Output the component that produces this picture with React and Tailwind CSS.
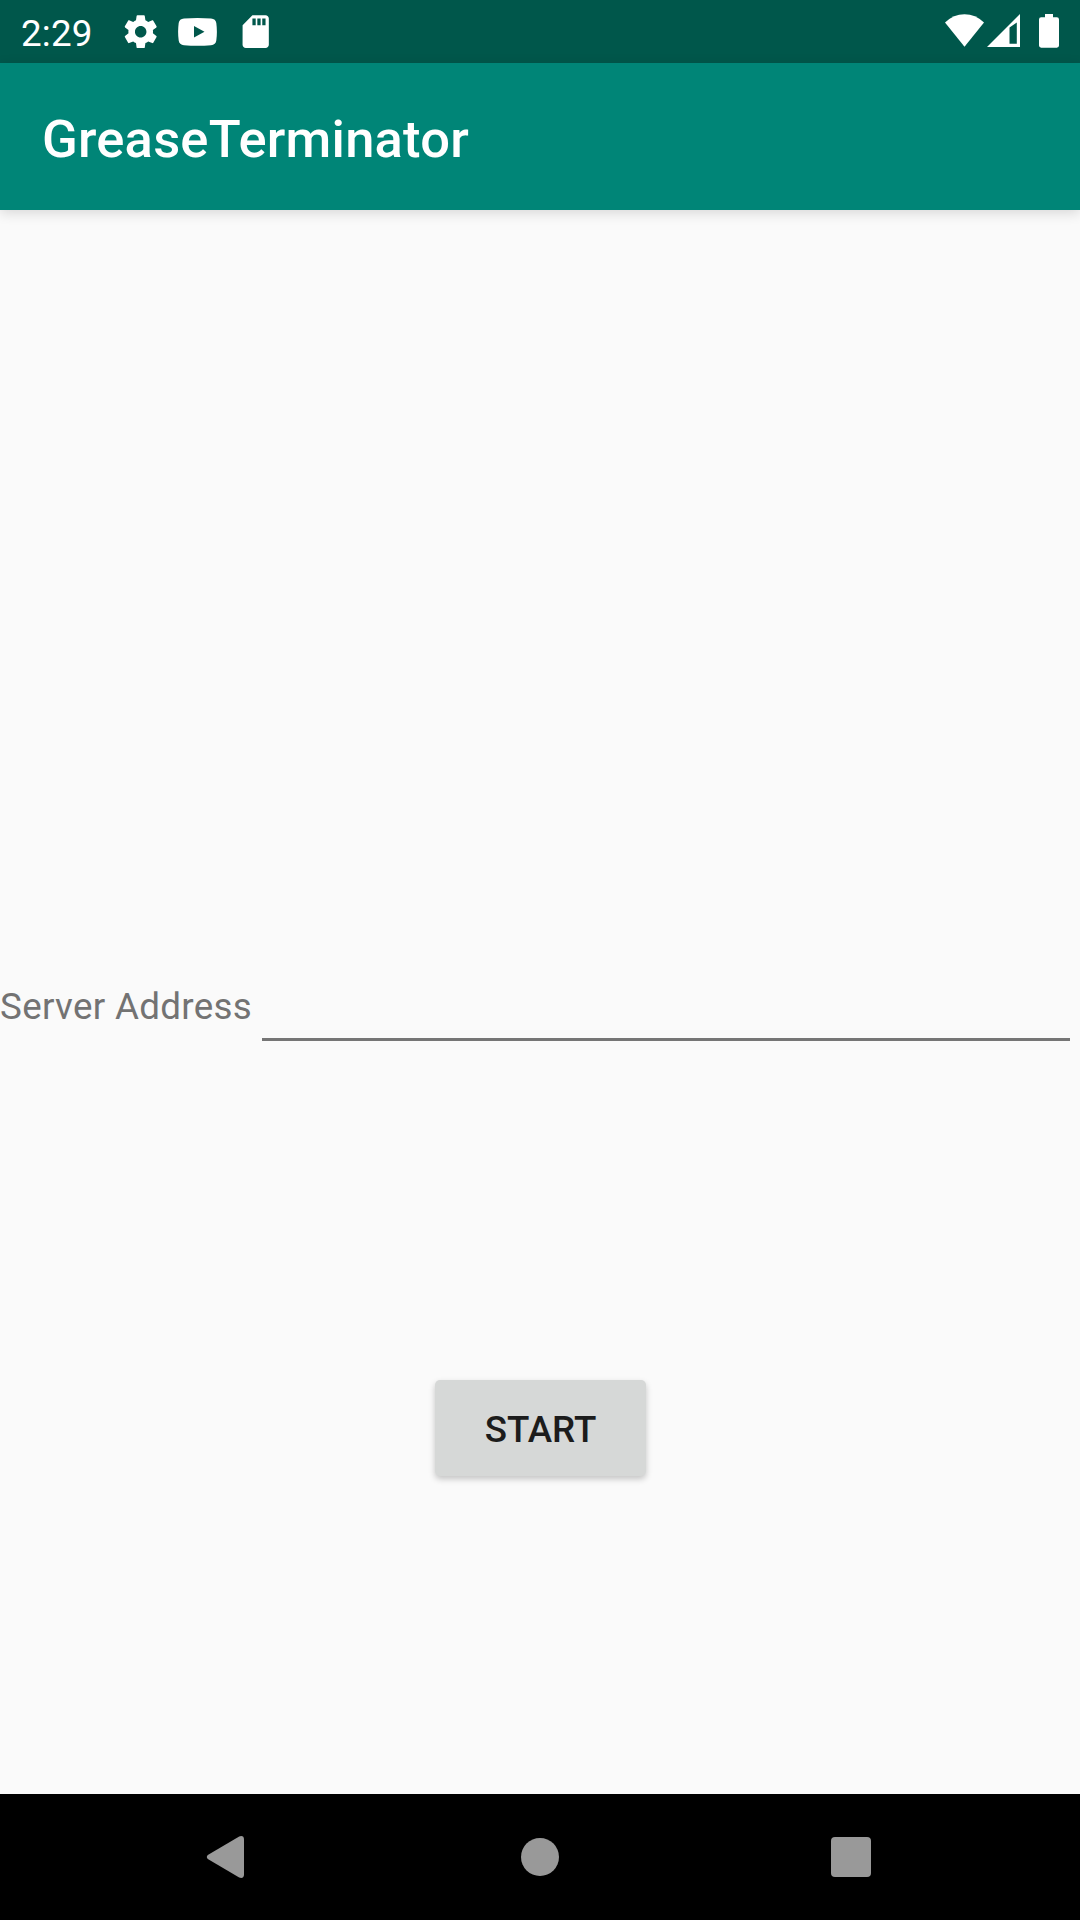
function StatusBar() {
  return (
    <header className="flex h-[63px] w-full items-start bg-[#00574b] text-white">
      <span className="ml-[21px] mt-[12px] w-[100px] text-[36.75px] leading-[43px] tracking-[0.2px]">2:29</span>
      <svg className="mt-[12px] h-[39.4px] w-[39.4px]" viewBox="0 0 24 24" fill="currentColor">
        <path d="M19.43 12.98c.04-.32.07-.64.07-.98s-.03-.66-.07-.98l2.11-1.65c.19-.15.24-.42.12-.64l-2-3.46c-.12-.22-.39-.3-.61-.22l-2.49 1c-.52-.4-1.08-.73-1.69-.98l-.38-2.65C14.46 2.18 14.25 2 14 2h-4c-.25 0-.46.18-.49.42l-.38 2.65c-.61.25-1.17.59-1.69.98l-2.49-1c-.23-.09-.49 0-.61.22l-2 3.46c-.13.22-.07.49.12.64l2.11 1.65c-.04.32-.07.65-.07.98s.03.66.07.98l-2.11 1.65c-.19.15-.24.42-.12.64l2 3.46c.12.22.39.3.61.22l2.49-1c.52.4 1.08.73 1.69.98l.38 2.65c.03.24.24.42.49.42h4c.25 0 .46-.18.49-.42l.38-2.65c.61-.25 1.17-.59 1.69-.98l2.49 1c.23.09.49 0 .61-.22l2-3.46c.12-.22.07-.49-.12-.64l-2.11-1.65zM12 15.5c-1.93 0-3.5-1.57-3.5-3.5s1.57-3.5 3.5-3.5 3.5 1.57 3.5 3.5-1.57 3.5-3.5 3.5z" />
      </svg>
      <svg className="ml-[17.6px] mt-[18px] h-[28px] w-[39px]" viewBox="0 0 39 28" fill="currentColor" fillRule="evenodd">
        <path d="M6 .5Q19.500-.5 33 .5Q37.700.8 38.300 5Q39.500 13.800 38.300 22.500Q37.700 26.800 33 27.200Q19.500 28.200 6 27.200Q1.300 26.800.7 22.500Q-.5 13.800.7 5Q1.300.8 6 .5ZM16 8V19.500L26.500 13.700Z" />
      </svg>
      <svg className="ml-[19.200px] mt-[12px] h-[39.4px] w-[39.4px]" viewBox="0 0 24 24" fill="currentColor">
        <path d="M18 2h-8L4.02 8 4 20c0 1.1.9 2 2 2h12c1.1 0 2-.9 2-2V4c0-1.1-.9-2-2-2zm-6 6h-2V4h2v4zm3 0h-2V4h2v4zm3 0h-2V4h2v4z" />
      </svg>
      <div className="ml-auto mr-[21px] mt-[14px] flex">
        <svg className="h-[34px] w-[39px]" viewBox="0 0 39 34" fill="currentColor">
          <path d="M0 8.600Q8.500.3 19.500.3T39 8.600L19.500 32.800Z" />
        </svg>
        <svg className="ml-[3px] h-[34px] w-[33px]" viewBox="0 0 33 34" fill="currentColor" fillRule="evenodd">
          <path d="M0 33L33 0V33ZM22.500 13.500V29.800H29.800V8.500Z" />
        </svg>
        <svg className="ml-[19px] h-[34px] w-[20px]" viewBox="0 0 20 34" fill="currentColor">
          <path d="M6 0H14V3.200H17.800Q20 3.200 20 5.400V31.600Q20 33.700 17.800 33.700H2.200Q0 33.700 0 31.600V5.400Q0 3.200 2.200 3.200H6Z" />
        </svg>
      </div>
    </header>
  );
}

function AppBar() {
  return (
    <div className="relative flex h-[147px] items-center bg-[#008577] pl-[42px] pt-[5px] shadow-[0_3px_12px_rgba(0,0,0,0.14)]">
      <h1 className="text-[52.5px] font-medium leading-[62px] tracking-[0.22px] text-white">GreaseTerminator</h1>
    </div>
  );
}

function NavBar() {
  return (
    <nav className="flex h-[126px] items-center bg-black text-[#999999]">
      <svg className="ml-[206px] h-[42px] w-[38px]" viewBox="0 0 38 42" fill="currentColor">
        <path d="M1.800 18.900L33.200.4Q38 -.9 38 3.500V38.500Q38 42.900 33.200 41.600L1.800 23.100Q-.2 21 1.800 18.900Z" />
      </svg>
      <div className="ml-[277px] size-[38px] rounded-full bg-[#999999]" />
      <div className="ml-[272px] size-[40px] rounded-[4px] bg-[#999999]" />
    </nav>
  );
}

export default function App() {
  return (
    <div className="flex h-[1920px] w-[1080px] flex-col overflow-hidden bg-[#fafafa] font-['Roboto',sans-serif]">
      <StatusBar />
      <AppBar />
      <main className="flex flex-1 flex-col items-center pt-[774px]">
        <label className="flex h-[57px] w-full items-start">
          <span className="w-[262px] whitespace-nowrap pt-px text-[36.75px] leading-[43px] tracking-[0.31px] text-[#737373]">
            Server Address
          </span>
          <input className="h-[57px] w-[808px] border-b-[3px] border-[#757575] bg-transparent outline-none" />
        </label>
        <button className="mt-[339px] h-[96px] w-[211px] rounded-[5px] bg-[#d6d8d7] pl-px pt-[4px] text-[36.75px] font-medium text-[#1c1c1c] shadow-[0_3px_6px_rgba(0,0,0,0.22)]">
          START
        </button>
      </main>
      <NavBar />
    </div>
  );
}
